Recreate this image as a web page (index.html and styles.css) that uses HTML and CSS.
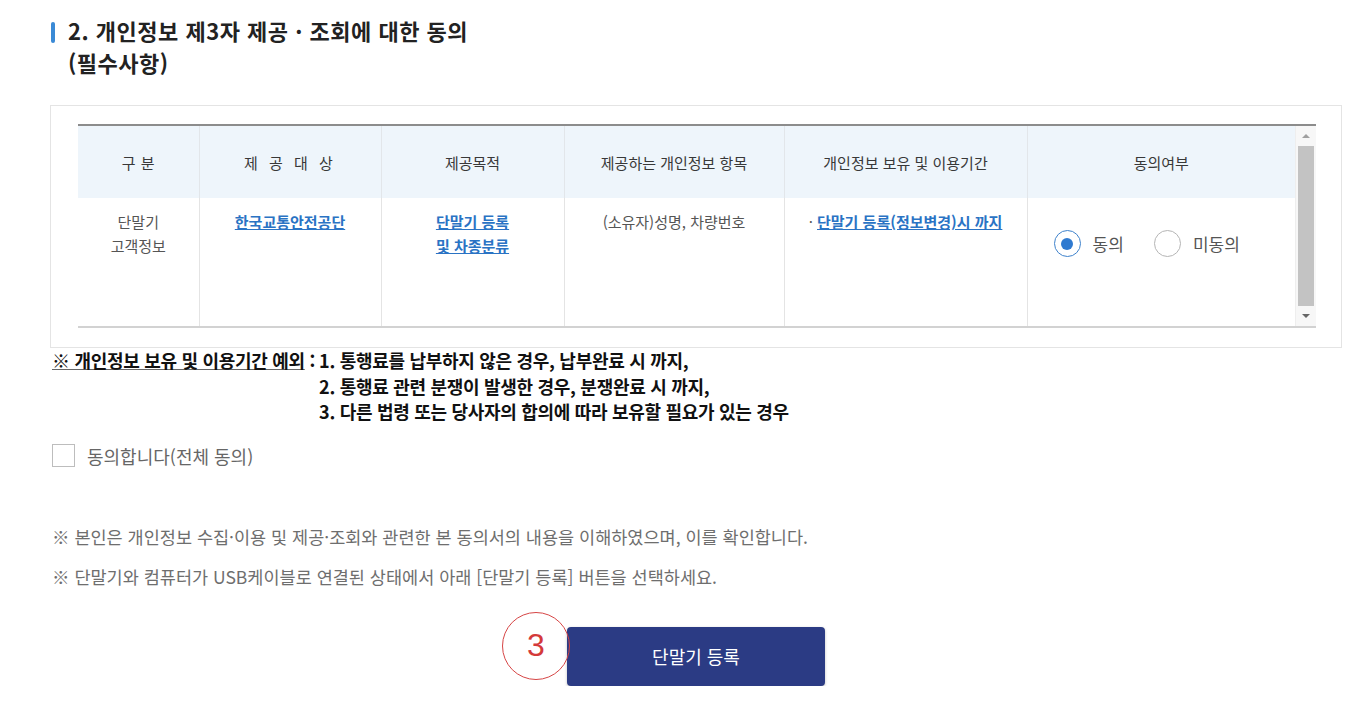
FILE: index.html
```html
<!DOCTYPE html>
<html lang="ko">
<head>
    <meta charset="UTF-8">
    <meta name="viewport" content="width=device-width, initial-scale=1.0">
    <title>개인정보 제3자 제공 · 조회에 대한 동의</title>
    <link rel="stylesheet" href="styles.css">
</head>
<body>
    <div class="container">
        <h2 class="sec-title">
            <span class="sec-bar"></span>
            <span>2. 개인정보 제3자 제공 · 조회에 대한 동의<br>(필수사항)</span>
        </h2>

        <div class="agree-box">
            <div class="table-wrap">
                <table class="agree-table">
                    <colgroup>
                        <col style="width:121px">
                        <col style="width:182px">
                        <col style="width:183px">
                        <col style="width:220px">
                        <col style="width:243px">
                        <col>
                    </colgroup>
                    <thead>
                        <tr>
                            <th class="spaced">구 분</th>
                            <th class="spaced wide">제 공 대 상</th>
                            <th>제공목적</th>
                            <th>제공하는 개인정보 항목</th>
                            <th>개인정보 보유 및 이용기간</th>
                            <th>동의여부</th>
                        </tr>
                    </thead>
                    <tbody>
                        <tr>
                            <td>단말기<br>고객정보</td>
                            <td><a href="#" class="lnk">한국교통안전공단</a></td>
                            <td><a href="#" class="lnk">단말기 등록<br>및 차종분류</a></td>
                            <td>(소유자)성명, 차량번호</td>
                            <td>· <a href="#" class="lnk">단말기 등록(정보변경)시 까지</a></td>
                            <td class="radio-cell">
                                <label class="radio"><input type="radio" name="agree3" checked><span class="dot"></span>동의</label>
                                <label class="radio"><input type="radio" name="agree3"><span class="dot"></span>미동의</label>
                            </td>
                        </tr>
                    </tbody>
                </table>
                <div class="fake-scroll">
                    <span class="arr up"></span>
                    <span class="thumb"></span>
                    <span class="arr down"></span>
                </div>
            </div>
        </div>

        <div class="except">
            <div class="except-label"><u>※ 개인정보 보유 및 이용기간 예외</u> :</div>
            <div class="except-list">
                <div>1. 통행료를 납부하지 않은 경우, 납부완료 시 까지,</div>
                <div>2. 통행료 관련 분쟁이 발생한 경우, 분쟁완료 시 까지,</div>
                <div>3. 다른 법령 또는 당사자의 합의에 따라 보유할 필요가 있는 경우</div>
            </div>
        </div>

        <label class="check-all">
            <input type="checkbox"><span class="box"></span>동의합니다(전체 동의)
        </label>

        <p class="notice">※ 본인은 개인정보 수집·이용 및 제공·조회와 관련한 본 동의서의 내용을 이해하였으며, 이를 확인합니다.</p>
        <p class="notice">※ 단말기와 컴퓨터가 USB케이블로 연결된 상태에서 아래 [단말기 등록] 버튼을 선택하세요.</p>

        <div class="btn-area">
            <button class="btn-reg">단말기 등록
                <span class="step-mark">3</span>
            </button>
        </div>
    </div>
</body>
</html>
```

FILE: styles.css
```css
body {
    margin: 0;
    background-color: #fff;
    font-family: "Noto Sans CJK KR", "Noto Sans", sans-serif;
    color: #333;
}
.container {
    width: 1292px;
    margin-left: 50px;
    padding-top: 14px;
}

/* 제목 */
.sec-title {
    display: flex;
    align-items: flex-start;
    gap: 13px;
    margin: 0;
    font-size: 22px;
    font-weight: 700;
    line-height: 32px;
    color: #222;
    letter-spacing: 0.5px;
}
.sec-bar {
    flex: none;
    width: 4px;
    height: 21px;
    margin-top: 8px;
    margin-left: 1px;
    border-radius: 2px;
    background-color: #3a8ad6;
}

/* 동의 표 */
.agree-box {
    margin-top: 27px;
    border: 1px solid #e4e4e4;
    padding: 18px 25px 19px 27px;
}
.table-wrap {
    display: flex;
    border-top: 2px solid #8c8c8c;
    border-bottom: 2px solid #d2d2d2;
}
.agree-table {
    flex: 1;
    border-collapse: collapse;
    table-layout: fixed;
    font-size: 15px;
}
.agree-table thead tr {
    height: 72px;
}
.agree-table tbody tr {
    height: 128px;
}
.agree-table th {
    padding: 0;
    background-color: #eef5fb;
    font-weight: 400;
    color: #383838;
    border-left: 1px solid #e2e6ea;
}
.agree-table td {
    padding: 12px 6px 0;
    vertical-align: top;
    text-align: center;
    line-height: 24px;
    color: #555;
    border-left: 1px solid #e4e4e4;
}
.agree-table th:first-child,
.agree-table td:first-child {
    border-left: none;
}
.agree-table th.spaced {
    word-spacing: 1px;
}
.agree-table th.wide {
    letter-spacing: 3px;
}
.lnk {
    color: #2a73c4;
    font-weight: 700;
    text-decoration: underline;
}

.radio-cell {
    text-align: left !important;
    padding: 32px 0 0 26px !important;
}
.radio {
    display: inline-flex;
    align-items: center;
    margin-right: 26px;
    font-size: 17px;
    color: #555;
    cursor: pointer;
}
.radio input {
    display: none;
}
.radio .dot {
    width: 27px;
    height: 27px;
    box-sizing: border-box;
    border: 1px solid #b5b5b5;
    border-radius: 50%;
    margin-right: 12px;
    position: relative;
}
.radio input:checked + .dot {
    border-color: #3e82cc;
}
.radio input:checked + .dot::after {
    content: "";
    position: absolute;
    left: 6.5px;
    top: 6.5px;
    width: 12px;
    height: 12px;
    border-radius: 50%;
    background-color: #2f7ad0;
}

/* 스크롤바 모양 */
.fake-scroll {
    flex: none;
    width: 20px;
    display: flex;
    flex-direction: column;
    align-items: center;
    background-color: #f7f7f7;
    border-left: 1px solid #eee;
}
.fake-scroll .thumb {
    width: 16px;
    flex: 1;
    background-color: #c3c3c3;
}
.fake-scroll .arr {
    height: 20px;
    display: flex;
    align-items: center;
}
.fake-scroll .arr::before {
    content: "";
    border-left: 4px solid transparent;
    border-right: 4px solid transparent;
}
.fake-scroll .up::before {
    border-bottom: 4px solid #a0a0a0;
}
.fake-scroll .down::before {
    border-top: 4px solid #666;
}

/* 예외 안내 */
.except {
    display: flex;
    padding-left: 2px;
    font-size: 18px;
    font-weight: 700;
    line-height: 25.5px;
    color: #111;
    letter-spacing: -0.3px;
}
.except-label {
    padding-right: 4px;
}
.except-label u {
    text-decoration-color: #666;
}

/* 전체 동의 */
.check-all {
    display: flex;
    align-items: center;
    margin-top: 18px;
    margin-left: 2px;
    font-size: 18px;
    color: #666;
    cursor: pointer;
}
.check-all input {
    display: none;
}
.check-all .box {
    width: 23px;
    height: 23px;
    box-sizing: border-box;
    border: 1px solid #bdbdbd;
    margin-right: 12px;
}

.notice {
    margin: 0;
    padding-left: 2px;
    font-size: 17.5px;
    line-height: 40px;
    color: #6e6e6e;
}
.notice:first-of-type {
    margin-top: 48px;
}

/* 등록 버튼 */
.btn-area {
    display: flex;
    justify-content: center;
    margin-top: 30px;
}
.btn-reg {
    position: relative;
    width: 258px;
    height: 59px;
    border: none;
    border-radius: 4px;
    background-color: #2b3b84;
    color: #fff;
    font-family: inherit;
    font-size: 18px;
    cursor: pointer;
    box-shadow: 0 1px 3px rgba(0,0,0,0.25);
}
.step-mark {
    position: absolute;
    left: -65px;
    top: -15px;
    width: 68px;
    height: 68px;
    box-sizing: border-box;
    border: 1.5px solid #d64545;
    border-radius: 50%;
    display: flex;
    align-items: center;
    justify-content: center;
    font-size: 32px;
    font-family: "Liberation Sans", sans-serif;
    color: #d43a3a;
}
```
